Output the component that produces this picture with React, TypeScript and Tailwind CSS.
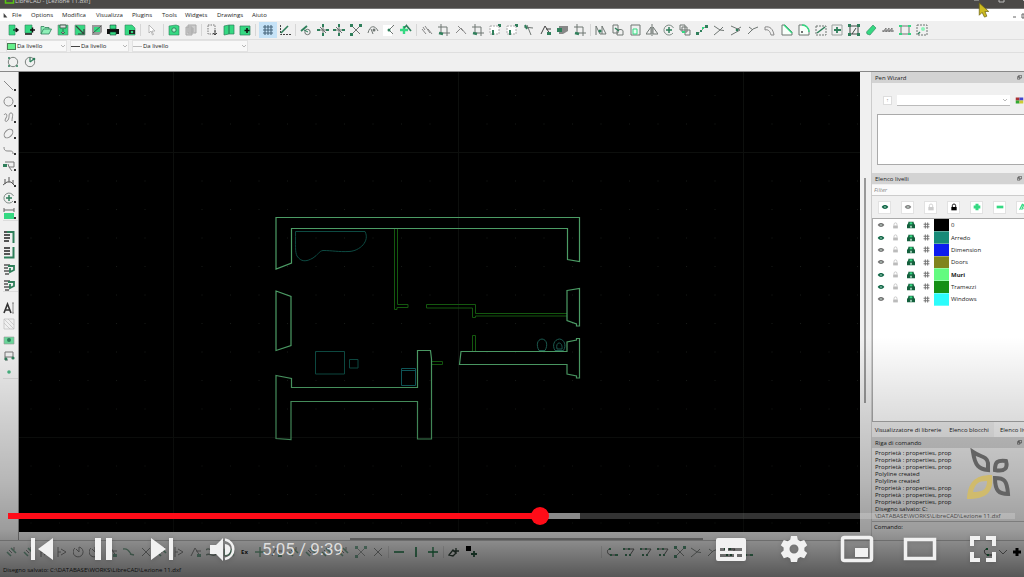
import type { ReactNode } from "react";
import clsx from "clsx";

const G = "#35d982";
const D = "#2f7f5b";
const K = "#6f7673";

const GLYPHS: Record<string, ReactNode> = {
  fileNew: (
    <>
      <path d="M2 1h6v10H2z" fill={G} stroke={D} strokeWidth=".6" />
      <path d="M6 6h5M9 4l2.500 2L9 8z" stroke="#111" fill="#111" />
    </>
  ),
  fileTemplate: (
    <>
      <path d="M1 1h7v8H1z" fill={G} stroke={D} strokeWidth=".6" />
      <path d="M1 10h7M6 6h5M8.500 3.500v5" stroke="#111" strokeWidth="1.500" />
    </>
  ),
  open: <path d="M1 10V2.500h3l1 1h4V5h2.500L9 10zM1 10l2.500-5H9" fill="#8ff0b8" stroke={D} strokeWidth=".8" />,
  save: (
    <>
      <path d="M1 1h10v10H1z" fill={G} stroke={K} strokeWidth=".6" />
      <path d="M3 1h6v3H3zM6 5v5M4 8l2 2 2-2" fill="#ddd" stroke="#3b5b4b" strokeWidth=".9" />
    </>
  ),
  saveAs: (
    <>
      <path d="M1 1h10v10H1z" fill={G} stroke={K} strokeWidth=".6" />
      <path d="M2 2l8 8M4 10h6V5" fill="none" stroke="#35443d" strokeWidth="1.200" />
    </>
  ),
  saveAll: (
    <>
      <path d="M1 1h10v7L8 11H1z" fill="#999" />
      <path d="M3 3h6v5H3z" fill={G} />
      <path d="M2 9l8-7" stroke="#333" strokeWidth=".7" />
    </>
  ),
  print: (
    <>
      <path d="M0 5h12v5H0z" fill="#111" />
      <path d="M3 1h6v4H3zM3 8h6v3H3z" fill={G} stroke="#143" strokeWidth=".6" />
    </>
  ),
  preview: (
    <>
      <path d="M1 1h7l3 3v7H1z" fill={G} stroke={D} strokeWidth=".6" />
      <path d="M5 6h6v4H5z" fill="#222" />
      <circle cx="8" cy="8" r="1.300" fill={G} />
    </>
  ),
  cursor: <path d="M4 1v8l2-2 1.500 4 1-.5L7 7h3z" fill="#fff" stroke="#aaa" strokeWidth=".8" />,
  zoomPage: (
    <>
      <path d="M1 2l7-1 3 1v9H1z" fill={G} stroke={D} strokeWidth=".6" />
      <circle cx="6" cy="6" r="2.200" fill="#a9f5ca" stroke={D} />
    </>
  ),
  copyGray: <path d="M3 1h8v8H3zM1 3h6v8H1zM4 5h5M4 7h5" fill="#ccc" stroke="#aaa" />,
  dashed: (
    <>
      <path d="M2 1h7v9H2z" fill="none" stroke="#777" strokeDasharray="1.500 1" />
      <path d="M9 6v5M7 9l2 2 2-2" stroke="#444" fill="none" />
    </>
  ),
  pages: <path d="M1 2l5-1v9l-5 1zM6 1h5v9H6z" fill={G} stroke={D} strokeWidth=".7" />,
  pageIn: (
    <>
      <path d="M1 2h10v9H1z" fill={G} stroke={D} strokeWidth=".7" />
      <path d="M8 4v5M5.500 6.500h5" stroke="#111" strokeWidth="1.600" />
    </>
  ),
  grid: <path d="M3 1v10M6 1v10M9 1v10M1 3h10M1 6h10M1 9h10" stroke="#47657c" strokeWidth="1.100" />,
  axis: (
    <>
      <path d="M1.500 1v9.500H12" fill="none" stroke="#444" strokeDasharray="2 1" />
      <path d="M2 9l7-7" stroke={D} strokeWidth="1.600" />
    </>
  ),
  snapFree: (
    <>
      <path d="M1 7l6-5" stroke={D} strokeWidth="1.800" />
      <circle cx="7.500" cy="8" r="2.700" fill="none" stroke={K} />
      <path d="M4 6l4 2" stroke={D} />
    </>
  ),
  snapGrid: (
    <>
      <path d="M6 1v10M1 6h10M3 3l6 6" stroke={K} />
      <path d="M5 0h2v3H5zM0 5h3v2H0zM9 5h3v2H9zM5 9h2v3H5z" fill={D} />
    </>
  ),
  snapEnd: (
    <>
      <path d="M2 2l8 8M10 2l-8 8" stroke={K} />
      <path d="M0 0h3v3H0zM9 0h3v3H9zM0 9h3v3H0z" fill={D} />
    </>
  ),
  arc: (
    <>
      <path d="M1 9c2-8 7-8 10-2M4 5l2 5" stroke={K} fill="none" />
      <circle cx="7" cy="6" r="1.500" fill={K} />
    </>
  ),
  pick: (
    <>
      <path d="M0 1h9v11H0z" fill="#fff" />
      <path d="M11 1L6 6l4 4" fill="none" stroke={K} />
      <circle cx="6" cy="6" r="1.500" fill={D} />
    </>
  ),
  plusTool: (
    <>
      <path d="M4 2v8M0 6h8" stroke={G} strokeWidth="2.400" />
      <path d="M6 1l5 6M4 4l3-3" stroke={D} strokeWidth="1.700" />
    </>
  ),
  slashes: <path d="M1 5l4 5M4 2l5 7M7 5l4 5M2 3l2 3" stroke="#888" fill="none" />,
  crop: (
    <>
      <path d="M3 0v9h9M0 3h9v9" stroke={K} fill="none" />
      <path d="M1 9l4 1" stroke={D} strokeWidth="2.400" />
    </>
  ),
  tee: <path d="M1 9l5-5 5 6M3 2l5 5" stroke="#888" fill="none" />,
  pinBox: (
    <>
      <path d="M1 2h9v8H1z" fill="#fff" stroke="#aaa" strokeDasharray="2 1" />
      <path d="M4 6v5M9 1h2v2" stroke={D} strokeWidth="2" />
    </>
  ),
  pickLine: (
    <>
      <path d="M1 3l9 1M4 1l4 10" stroke={K} />
      <path d="M2 1l2 4" stroke={D} strokeWidth="2" />
    </>
  ),
  block: (
    <>
      <path d="M2 2h9v5l-5 3H2z" fill="#888" />
      <path d="M0 4h5v4H0z" fill={D} />
    </>
  ),
  warp: (
    <>
      <path d="M1 11V2l4 8h6L7 2v8" fill="none" stroke={K} />
      <circle cx="5" cy="7" r="1.600" fill={D} />
    </>
  ),
  copy: (
    <>
      <path d="M1 1h5v8H1zM5 7c0-2 6-2 6 0v4H5z" fill="none" stroke={K} />
      <path d="M3 4l4 3" stroke={D} strokeWidth="1.500" />
    </>
  ),
  scale: (
    <>
      <path d="M2 1h9v10H2z" fill="none" stroke={K} />
      <path d="M4 5h4v5H4z" fill="#e8fff2" stroke={G} />
    </>
  ),
  mirror: <path d="M6 0v12M5 3v7H0zM7 3v7h5z" fill="none" stroke={K} />,
  rotate: (
    <>
      <path d="M10 9a5 5 0 1 1 .5-5" fill="none" stroke="#7d8a84" />
      <path d="M6 3v6M3 6h6" stroke={D} strokeWidth="1.500" />
    </>
  ),
  multi: (
    <>
      <path d="M1 1h5v5H1zM3 3h5v5H3zM6 6h5v5H6z" fill="none" stroke={K} />
      <path d="M3 8h3" stroke={G} strokeWidth="2" />
    </>
  ),
  dots: (
    <>
      <path d="M2 10l8-8" stroke={K} strokeDasharray="2 1" />
      <path d="M0 8h3v3H0zM9 1h3v3H9zM4 6h2v2H4z" fill={D} />
      <path d="M6 3h2v2H6z" fill={G} />
    </>
  ),
  cross: <path d="M1 2l6 4 4 .5M1 11l6-5 3-3" fill="none" stroke={K} />,
  crossDot: (
    <>
      <path d="M1 2l9 4-9 5M6 6l5-3" fill="none" stroke={K} />
      <circle cx="7" cy="6" r="1.300" fill={D} />
    </>
  ),
  vee: <path d="M1 10l5-5 5-2M2 3l4 3" fill="none" stroke={K} />,
  offset: <path d="M1 3c5-1 8 2 9 8M1 6c3-1 5 1 6 5M1 3v3M7 11h3" fill="none" stroke="#888" />,
  bevel: (
    <>
      <path d="M1 1v10h10V8L4 1z" fill="#f8fffa" stroke={K} />
      <path d="M3 1l8 8" stroke={G} strokeWidth="1.500" />
    </>
  ),
  fillet: (
    <>
      <path d="M1 1v10h10V8C11 4 8 1 5 1z" fill="#f8fffa" stroke={K} />
      <path d="M4 1c4 0 7 3 7 7" stroke={G} strokeWidth="1.500" fill="none" />
      <circle cx="4" cy="8" r="1" fill="#444" />
    </>
  ),
  divide: (
    <>
      <path d="M1 2h10v9H1z" fill="none" stroke={K} strokeDasharray="2 1" />
      <path d="M2 9l8-6" stroke={D} strokeWidth="1.500" />
    </>
  ),
  stretch: (
    <>
      <path d="M1 1h10v10H1z" fill="none" stroke="#9aa19e" />
      <path d="M6 3v6M3 6h7" stroke={D} strokeWidth="1.800" />
    </>
  ),
  props: (
    <>
      <path d="M2 2h8v8H2zM4 10l4-6" fill="none" stroke="#3f4744" />
      <path d="M0 0h3v3H0zM9 0h3v3H9zM0 9h3v3H0zM9 9h3v3H9z" fill={D} />
    </>
  ),
  erase: <path d="M8 1l3 3-6 7-3-1-.5-2z" fill={G} stroke={D} strokeWidth=".6" />,
  textEdit: <path d="M1 8l3-4v4l3-4v4l3-4v4M0 7h12" fill="none" stroke="#777" />,
  nodes: (
    <>
      <path d="M2 2h8v8H2z" fill="none" stroke={K} />
      <path d="M0 1h3v2H0zM9 1h3v2H9zM0 9h3v2H0zM9 9h3v2H9z" fill={G} />
    </>
  ),
  explode: (
    <>
      <path d="M1 1h10v10H1z" fill="none" stroke={K} strokeDasharray="2 1" />
      <circle cx="7" cy="5" r="2" fill="#8df3b9" />
      <path d="M2 10l2-2" stroke={D} strokeWidth="1.500" />
    </>
  ),
  circleA: (
    <>
      <circle cx="6" cy="6" r="4.700" fill="none" stroke={K} strokeWidth=".9" />
      <path d="M1 2h2M1 10h2M9 10h2" stroke={D} strokeWidth="1.500" />
    </>
  ),
  circleB: (
    <>
      <circle cx="6" cy="6" r="4.700" fill="none" stroke={K} strokeWidth=".9" />
      <path d="M6 6l4-3M6 1.500V6" stroke={D} strokeWidth="1.200" />
      <circle cx="10" cy="3" r="1.300" fill={D} />
    </>
  ),
  line: <path d="M1 1l9 9" stroke="#888" />,
  circle: <circle cx="5.500" cy="5.500" r="4.500" fill="none" stroke="#888" />,
  spline: <path d="M1 3c2-3 4 0 2 3s0 5 2 2 0-7 3-7 1 4 1 8" fill="none" stroke="#888" />,
  ellipse: <ellipse cx="5.500" cy="5.500" rx="5" ry="3.500" transform="rotate(-45 5.500 5.500)" fill="none" stroke="#888" />,
  poly: <path d="M1 3c0 4 2 4 5 4s4 0 4 3" fill="none" stroke="#888" />,
  select: (
    <>
      <path d="M2 2h9v5H6l3 4M6 7L5 4" fill="none" stroke="#777" />
      <path d="M0 4h4v3H0z" fill={D} />
    </>
  ),
  dimension: <path d="M0 9l4-3 4 0 3 3M6 1v5M2 3v5M10 4v4" fill="none" stroke="#555" />,
  measure: (
    <>
      <path d="M1 2h10M1 0v4M11 0v4" stroke="#666" />
      <path d="M1 5h10v6H1z" fill={G} />
    </>
  ),
  orderA: (
    <>
      <path d="M1 1h6M1 4h6M1 7h6M1 10h5" stroke="#555" strokeWidth="1.800" />
      <path d="M4 1h6.500v11" fill="none" stroke={D} strokeWidth="2" />
    </>
  ),
  orderB: (
    <>
      <path d="M1 1h6M1 4h6M1 7h6" stroke="#555" strokeWidth="1.800" />
      <path d="M10.500 0v10.500H1" fill="none" stroke={D} strokeWidth="2" />
    </>
  ),
  orderC: (
    <>
      <path d="M1 2h6M1 5h4M1 8h6M2 11h4" stroke="#555" strokeWidth="1.700" />
      <path d="M5 3h6v4l-4 2V5" fill="none" stroke={D} strokeWidth="1.800" />
    </>
  ),
  text: (
    <>
      <path d="M1 11L4.500 2 8 11M2.500 8h4" fill="none" stroke="#333" strokeWidth="1.600" />
      <path d="M9 1h2M10 1v10M9 11h2" stroke="#888" />
    </>
  ),
  hatch: <path d="M1 1h10v10H1zM1 5l6 6M1 1l10 10M5 1l6 6" fill="none" stroke="#bbb" strokeWidth=".7" />,
  image: (
    <>
      <path d="M1 3h10v7H1z" fill="#6bd69a" stroke="#999" strokeWidth=".6" />
      <circle cx="6" cy="6" r="2" fill={D} />
    </>
  ),
  insert: (
    <>
      <path d="M2 2h8v5H2zM2 7v3h3" fill="none" stroke="#777" />
      <circle cx="10" cy="8" r="1.600" fill={D} />
      <circle cx="3" cy="9" r="1.400" fill={D} />
    </>
  ),
  point: <circle cx="6" cy="6" r="1.800" fill="#46b582" />,
  eye: (
    <>
      <path d="M1 6c2.500-4 7.500-4 10 0-2.500 4-7.500 4-10 0z" fill="currentColor" />
      <circle cx="6" cy="6" r="1" fill="#dfe" />
    </>
  ),
  lock: (
    <>
      <path d="M2 6h8v5H2z" fill="currentColor" />
      <path d="M3.500 6V4a2.500 2.500 0 0 1 5 0v2" fill="none" stroke="currentColor" strokeWidth="1.300" />
    </>
  ),
  printer: (
    <>
      <path d="M0 6l2-3V1h8v2l2 3v5H0z" fill="#14603d" />
      <path d="M4 2h4v3H4z" fill={G} />
      <path d="M5 7h2v3H5z" fill="#dfe" />
    </>
  ),
  hash: <path d="M4 1v10M8 1v10M1 4h10M1 8h10" stroke="#777" strokeWidth="1.800" />,
  plus: <path d="M6 1v10M1 6h10" stroke={G} strokeWidth="4.500" />,
  plusDark: <path d="M6 2v8M2 6h8" stroke="#000" strokeWidth="3" />,
  minus: <path d="M1 6h10" stroke={G} strokeWidth="4" />,
  pen: <path d="M1 10l4-8 2 1-3 7M7 9l4-5v6" fill="none" stroke={G} strokeWidth="1.800" />,
  float: <path d="M4 1h7v6H4zM1 4h6v6H1z" fill="#ddd" stroke="#333" strokeWidth="1.300" />,
  palette: (
    <>
      <path d="M1 2h5v4H1z" fill="#a33" />
      <path d="M6 2h5v4H6z" fill="#44c" />
      <path d="M1 6h5v4H1z" fill="#3a3" />
      <path d="M6 6h5v4H6z" fill="#cc3" />
    </>
  ),
  chevron: <path d="M2 4l4 4 4-4" fill="none" stroke="#777" />,
  clock: <path d="M2 2a5 5 0 1 0 4-1v5L3 3" fill="none" stroke="#444" />,
  dimA: <path d="M2 1v10M5 3l5 3-5 3M2 6h3" fill="none" stroke="#444" />,
  snapA: (
    <>
      <path d="M1 6l4 4M5 2l5 5" stroke={D} strokeWidth="1.600" />
      <path d="M3 4l3 3M8 1v3" stroke="#444" />
    </>
  ),
  wave: <path d="M0 4c3-4 5 3 11-1M0 9c4-3 6 3 11-1" fill="none" stroke="#3d5a4b" strokeWidth="1.300" />,
  snapB: (
    <>
      <path d="M1 10L5 2l5 8M6 5h5" fill="none" stroke="#444" />
      <path d="M7 8h4v3H7z" fill={D} />
    </>
  ),
  snapC: <path d="M0 3c4-1 6 2 8 5M7 8l4 1" fill="none" stroke="#28704c" strokeWidth="1.300" />,
  xMark: <path d="M2 2l8 8M10 2l-8 8" stroke="#4c5250" />,
  hLine: <path d="M1 6h10M4 6h4" stroke="#1e7a48" strokeWidth="1.500" />,
  vLine: <path d="M6 1v10" stroke="#1e7a48" strokeWidth="1.600" />,
  cross2: <path d="M6 1v10M1 6h10" stroke="#1e7a48" strokeWidth="1.300" />,
  relA: <path d="M1 9l4-5 3 3-3 3zM8 2v6M5 5h6" fill="none" stroke="#2f4238" strokeWidth="1.300" />,
  relB: (
    <>
      <path d="M1 0h5v5H1z" fill="#000" />
      <path d="M9 5v6M6 8h6" stroke="#24563d" strokeWidth="1.800" />
    </>
  ),
  polyA: (
    <>
      <path d="M4 3C0 3 1 9 5 9h6" fill="none" stroke="#444" />
      <path d="M3 2h2v2H3zM9 8h3v2H9zM4 8h2v2H4z" fill="#1e7a48" />
    </>
  ),
  polyB: (
    <>
      <path d="M1 3h5l5 0-4 6" fill="none" stroke="#444" />
      <path d="M0 2h2v2H0zM5 2h2v2H5zM2 8h2v2H2zM6 8h2v2H6z" fill="#1c6a41" />
    </>
  ),
};

function Icon({ name, className = "size-3" }: { name: string; className?: string }) {
  return (
    <svg viewBox="0 0 12 12" className={clsx("shrink-0", className)} aria-hidden="true">
      {GLYPHS[name]}
    </svg>
  );
}

function Tools({ names, className }: { names: string[]; className?: string }) {
  return (
    <div className={clsx("flex shrink-0 items-center justify-between", className)}>
      {names.map((name, i) => (
        <button
          key={i}
          type="button"
          aria-label={name}
          className={clsx(
            "flex h-4 items-center justify-center",
            name === "grid" ? "w-[18px] bg-[#c5e2f7]" : "w-[14px]"
          )}
        >
          <Icon name={name} />
        </button>
      ))}
    </div>
  );
}

function Sep() {
  return <div className="mx-[3px] h-3 w-px shrink-0 bg-[#d6d6d6]" />;
}

const MENUS = [
  ["File", "w-[19px]"],
  ["Options", "w-[31px]"],
  ["Modifica", "w-[34px]"],
  ["Visualizza", "w-[36px]"],
  ["Plugins", "w-[30px]"],
  ["Tools", "w-[23px]"],
  ["Widgets", "w-[32px]"],
  ["Drawings", "w-[35px]"],
  ["Aiuto", "w-[24px]"],
];

const LAYERS = [
  { name: "0", swatch: "bg-black", visible: false },
  { name: "Arredo", swatch: "bg-[#178a78]", visible: true },
  { name: "Dimension", swatch: "bg-[#0d1cf0]", visible: false },
  { name: "Doors", swatch: "bg-[#80841c]", visible: false },
  { name: "Muri", swatch: "bg-[#63fb80]", visible: true, active: true },
  { name: "Tramezzi", swatch: "bg-[#159015]", visible: true },
  { name: "Windows", swatch: "bg-[#2cfcfb]", visible: false },
];

const LOG = [
  "Proprietà : properties, prop",
  "Proprietà : properties, prop",
  "Proprietà : properties, prop",
  "Polyline created",
  "Polyline created",
  "Proprietà : properties, prop",
  "Proprietà : properties, prop",
  "Proprietà : properties, prop",
  "Disegno salvato: C:",
  "\\DATABASE\\WORKS\\LibreCAD\\Lezione 11.dxf",
];

function TitleBar() {
  return (
    <header className="flex h-[9px] shrink-0 items-end overflow-hidden border-b border-[#777] bg-[#4b4947] pl-1 text-[#d0d0d0]">
      <svg viewBox="0 0 10 10" className="mb-1 h-[10px] w-[11px] shrink-0">
        <path d="M1 4v5h8V4" fill="none" stroke="#59c414" strokeWidth="1.500" />
      </svg>
      <span className="leading-[14px] whitespace-nowrap">LibreCAD - [Lezione 11.dxf]</span>
      <svg viewBox="0 0 52 9" className="ml-auto h-[9px] w-[52px] shrink-0" fill="none" stroke="#bbb">
        <path d="M2 1h5M27 0v3h5V0M50 0l2 2" />
      </svg>
    </header>
  );
}

function MenuBar() {
  return (
    <nav className="flex h-3 shrink-0 items-center bg-white pl-[3px]">
      <svg viewBox="0 0 8 8" className="mr-1 size-[5px]">
        <path d="M1 0v7h6z" fill="#444" />
      </svg>
      {MENUS.map(([label, width]) => (
        <button key={label} type="button" className={clsx("text-left", width)}>
          {label}
        </button>
      ))}
      <svg viewBox="0 0 14 8" className="ml-auto h-2 w-[14px]" fill="none" stroke="#666">
        <path d="M3 6h3M12 3h2v4h-2z" />
      </svg>
    </nav>
  );
}

function PenSelect({ label, className, children }: { label: string; className: string; children: ReactNode }) {
  return (
    <label className={clsx("flex h-[12px] items-center gap-px border border-[#e2e2e2] bg-[#f8f8f8]", className)}>
      {children}
      <select aria-label={label} className="min-w-0 grow appearance-none outline-none">
        <option>Da livello</option>
      </select>
      <Icon name="chevron" className="size-[6px]" />
    </label>
  );
}

function Toolbars() {
  return (
    <>
      <div className="flex h-[18px] shrink-0 items-center overflow-hidden pl-[6px]">
        <Tools
          className="w-[131px]"
          names={["fileNew", "fileTemplate", "open", "save", "saveAs", "saveAll", "print", "preview"]}
        />
        <Sep />
        <Tools className="w-4" names={["cursor"]} />
        <Sep />
        <Tools className="w-[31px]" names={["zoomPage", "copyGray"]} />
        <Sep />
        <Tools className="w-[47px]" names={["dashed", "pages", "pageIn"]} />
        <Sep />
        <Tools className="w-[33px]" names={["grid", "axis"]} />
        <Sep />
        <Tools
          className="w-[114px]"
          names={["snapFree", "snapGrid", "snapGrid", "snapEnd", "arc", "pick", "plusTool"]}
        />
        <Sep />
        <Tools
          className="w-[167px]"
          names={["slashes", "crop", "tee", "crop", "pinBox", "pinBox", "pickLine", "snapB", "block", "crop"]}
        />
        <Sep />
        <Tools
          className="w-[335px]"
          names={[
            "warp", "copy", "scale", "mirror", "rotate", "multi", "dots", "cross", "crossDot", "vee",
            "offset", "bevel", "fillet", "divide", "stretch", "props", "erase", "textEdit", "nodes", "explode",
          ]}
        />
      </div>
      <div className="flex h-[14px] shrink-0 items-center gap-[3px] border-y border-[#dfdfdf] pl-[6px]">
        <PenSelect label="Colore" className="w-[61px]">
          <span className="h-[7px] w-[9px] shrink-0 border border-[#4c7a55] bg-[#67f08b]" />
        </PenSelect>
        <PenSelect label="Spessore" className="w-[59px]">
          <span className="h-px w-[9px] shrink-0 bg-[#444]" />
        </PenSelect>
        <PenSelect label="Tipo di linea" className="w-[116px]">
          <span className="h-px w-[9px] shrink-0 bg-[#bbb]" />
        </PenSelect>
      </div>
      <div className="flex h-[18px] shrink-0 items-center pl-[6px]">
        <Tools className="w-[31px]" names={["circleA", "circleB"]} />
      </div>
    </>
  );
}

function SideTools() {
  const groups = [
    ["line", "circle", "spline", "ellipse", "poly", "select", "dimension", "rotate", "measure"],
    ["orderA", "orderB", "orderC", "orderC"],
    ["text", "hatch", "image", "insert", "point"],
  ];
  return (
    <aside className="flex w-[19px] shrink-0 flex-col gap-[6px] border-r border-[#999] pt-1 pl-[3px]">
      {groups.map((names, g) => (
        <div key={g} className="flex flex-col border-b border-[#dcdcdc]">
          {names.map((name, i) => (
            <button key={i} type="button" aria-label={name} className="flex h-4 w-[14px] items-end">
              <Icon name={name} />
              {g === 0 && <span className="-ml-px mb-px size-[2px] shrink-0 bg-[#333]" />}
            </button>
          ))}
        </div>
      ))}
    </aside>
  );
}

function FloorPlan() {
  return (
    <svg viewBox="19 72 841 460" className="min-h-0 w-full grow bg-black" fill="none" role="img" aria-label="Lezione 11">
      <defs>
        <pattern id="dots" x="458" y="437" width="28.500" height="28.500" patternUnits="userSpaceOnUse">
          <rect width="1" height="1" fill="#171a17" />
        </pattern>
      </defs>
      <rect x="19" y="72" width="841" height="460" fill="url(#dots)" />
      <path d="M173.500 72v460M458.500 72v460M743.500 72v460M19 152.500h841M19 437.500h841" stroke="#0d0f0d" />
      <g stroke="#0d4a42">
        <path d="M295.500 231.500H365C370 241 360 251 349 251.500C338 252 332 250.500 323 250.500C319 251 318 255 313 258C306 262 301 262 297 256C295 252 295.500 246 295.500 231.500Z" />
        <path d="M315.500 351.500h29v22.500h-29zM349.500 359.500h8.500v8.500h-8.500z" />
        <path d="M401.500 368.500h14v17h-14zM402 370.500h13" stroke="#0f5a5c" />
        <path d="M539 350.500c-3-5-2-11 3-11.500c5 .5 6 6.500 3 11.500zM555 350.500c-3-5-1-11 4.500-11.500c5 .5 7 6.500 4 11.500zM557 349c-2-8 6-8 5 0z" stroke="#1b5b50" />
      </g>
      <g stroke="#14580f">
        <path d="M394.500 228.500V309.500H397V307.500H408V304.500H397.500V228.500" />
        <path d="M567 313.500H475.500V304.500H426.500V308H472.500V317.500H475.500V316H567M472.500 351V335.500H475.500V351M431.500 361.500H442.500V364.500H431.500" />
      </g>
      <g stroke="#4c9c65" strokeWidth="1.200">
        <path d="M276 217.500H579.500V261.500L567.500 259.500V228.500H291.500V263L276 269Z" />
        <path d="M276 291L291 296.500V345.500L276 350.500Z" />
        <path d="M276 375.500L291.500 378.500V387.500H417.500V350.500H430.500L431.500 359V439H417.500V401.500H291V439.500L276 438.500Z" />
        <path d="M567 290.500L579.500 288.500V326H576.500V324L567 320.500Z" />
        <path d="M461 351.500H567V342L576.500 340V338.500H579.500V378H576.500V376L567 374V364.500H459.500Z" />
      </g>
    </svg>
  );
}

function DockHeader({ title }: { title: string }) {
  return (
    <h2 className="flex h-[11px] shrink-0 items-center justify-between bg-[#d3d3d3] pr-[2px] pl-[3px]">
      {title}
      <Icon name="float" className="size-[5px]" />
    </h2>
  );
}

function LayerTable() {
  return (
    <div className="min-h-0 grow overflow-hidden border border-r-0 border-[#aaa] bg-white">
      <table className="h-[87px] w-full table-fixed border-collapse">
        <tbody>
          {LAYERS.map((layer) => (
            <tr key={layer.name}>
              <td className={clsx("w-[15px]", layer.visible ? "text-[#15694a]" : "text-[#777]")}>
                <Icon name="eye" className="mx-auto size-2" />
              </td>
              <td className="w-[15px] text-[#bbb]">
                <Icon name="lock" className="mx-auto size-[7px]" />
              </td>
              <td className="w-[15px]">
                <Icon name="printer" className="mx-auto size-2" />
              </td>
              <td className="w-4">
                <Icon name="hash" className="mx-auto size-[7px]" />
              </td>
              <td className={clsx("w-[15px] border-b border-white/30", layer.swatch)} />
              <td className={clsx("pl-[2px] leading-[8px]", layer.active && "font-bold")}>{layer.name}</td>
            </tr>
          ))}
        </tbody>
      </table>
    </div>
  );
}

function Dock() {
  const actions = [
    ["eye", "text-[#15694a]"],
    ["eye", "text-[#888]"],
    ["lock", "text-[#ccc]"],
    ["lock", "text-black"],
    ["plus", ""],
    ["minus", ""],
    ["pen", ""],
  ];
  return (
    <aside className="flex w-[152px] shrink-0 flex-col overflow-hidden">
      <DockHeader title="Pen Wizard" />
      <div className="flex h-[31px] shrink-0 items-center gap-[5px] pt-[3px] pl-[11px]">
        <button type="button" className="size-[9px] border border-[#ddd] bg-white text-[5px] leading-[6px] text-[#999]">
          ↑
        </button>
        <label className="flex h-[11px] w-[117px] items-center border-b border-[#bbb] bg-white pr-[2px]">
          <select aria-label="Penna" className="min-w-0 grow appearance-none outline-none" />
          <Icon name="chevron" className="size-[6px]" />
        </label>
        <Icon name="palette" className="size-[9px]" />
      </div>
      <div className="ml-[5px] h-[51px] shrink-0 border border-r-0 border-[#aaa] bg-white" />
      <div className="h-2 shrink-0" />
      <DockHeader title="Elenco livelli" />
      <input
        aria-label="Filtro livelli"
        placeholder="Filter"
        className="mt-px h-[11px] shrink-0 border-b border-[#ccc] bg-[#fafafa] px-[2px] italic outline-none placeholder:text-[#888]"
      />
      <div className="flex h-[22px] shrink-0 items-center gap-[10px] pl-[6px]">
        {actions.map(([name, tone], i) => (
          <button
            key={i}
            type="button"
            aria-label={`${name} ${i}`}
            className={clsx("flex size-[13px] shrink-0 items-center justify-center border border-[#e2e2e2] bg-white", tone)}
          >
            <Icon name={name} className="size-2" />
          </button>
        ))}
      </div>
      <LayerTable />
      <div className="flex h-[15px] shrink-0 items-center whitespace-nowrap">
        <button type="button" className="w-[72px] shrink-0">Visualizzatore di librerie</button>
        <button type="button" className="w-[50px] shrink-0">Elenco blocchi</button>
        <button type="button" className="h-full shrink-0 bg-[#fafafa] px-[6px]">Elenco livelli</button>
      </div>
      <DockHeader title="Riga di comando" />
      <div className="mt-[2px] flex shrink-0 flex-col border-b border-[#bbb] pb-px pl-[3px] leading-[7px] whitespace-nowrap">
        {LOG.map((entry, i) => (
          <p key={i}>{entry}</p>
        ))}
      </div>
      <label className="flex h-[10px] shrink-0 items-center pl-[2px]">
        Comando:
        <input className="min-w-0 grow outline-none" />
      </label>
      <div className="h-2 shrink-0" />
    </aside>
  );
}

function BottomTools() {
  const left = [
    "snapA", "snapA", "dimA", "dimA", "clock", "clock", "snapB", "snapC", "xMark", "snapA", "dimA",
    "snapB", "wave", "image",
  ];
  return (
    <div className="flex h-[22px] shrink-0 items-center overflow-hidden border-t border-[#bbb] pl-[5px]">
      <Tools className="w-[231px] opacity-60" names={left} />
      <button type="button" className="w-[17px] text-center font-bold">Ex</button>
      <Tools
        className="w-[132px] opacity-60"
        names={["cross2", "snapB", "snapA", "snapA", "snapA", "snapA", "snapEnd", "xMark"]}
      />
      <Sep />
      <Tools className="w-[48px]" names={["hLine", "vLine", "cross2"]} />
      <Sep />
      <Tools className="w-[31px]" names={["relA", "relB"]} />
      <div className="grow" />
      <Sep />
      <Tools
        className="mr-[228px] w-[149px] opacity-80"
        names={["polyA", "polyB", "polyB", "polyB", "snapEnd", "cross", "vee", "polyB", "polyA"]}
      />
      <Tools className="w-[42px]" names={["polyA", "chevron", "plusDark"]} />
    </div>
  );
}

function ControlButton({ label, className, children }: { label: string; className: string; children: ReactNode }) {
  return (
    <button type="button" aria-label={label} className={clsx("flex shrink-0 justify-center", className)}>
      <svg viewBox="0 0 36 28" className="h-7 w-9 drop-shadow-sm" fill="#f1f1f1">
        {children}
      </svg>
    </button>
  );
}

function PlayerControls() {
  return (
    <div className="absolute inset-x-0 bottom-0 flex h-[240px] flex-col justify-end bg-[linear-gradient(to_bottom,transparent,rgba(0,0,0,0.12)_30%,rgba(0,0,0,0.24)_60%,rgba(0,0,0,0.35)_80%,rgba(0,0,0,0.64))]">
      <input
        type="range"
        aria-label="Seek"
        min={0}
        max={579}
        defaultValue={306}
        className="mr-[9px] ml-2 h-[18px] appearance-none bg-transparent outline-none [&::-webkit-slider-runnable-track]:h-[6px] [&::-webkit-slider-runnable-track]:bg-[linear-gradient(to_right,#ff0c18_53%,#8a8a8a_53%,#8a8a8a_56.8%,rgba(255,255,255,0.2)_56.8%)] [&::-webkit-slider-thumb]:-mt-[6px] [&::-webkit-slider-thumb]:size-[18px] [&::-webkit-slider-thumb]:appearance-none [&::-webkit-slider-thumb]:rounded-full [&::-webkit-slider-thumb]:bg-[#ff0c18]"
      />
      <div className="flex h-[52px] items-center pr-[10px] pb-1 pl-3">
        <ControlButton label="Previous" className="w-[60px]">
          <path d="M7 3h4v22H7zM29 3v22L14 14z" />
        </ControlButton>
        <ControlButton label="Pause" className="w-[60px]">
          <path d="M11 3h6v22h-6zM22 3h6v22h-6z" />
        </ControlButton>
        <ControlButton label="Next" className="w-[60px]">
          <path d="M7 3v22l15-11zM25 3h4v22h-4z" />
        </ControlButton>
        <ControlButton label="Mute" className="w-[60px]">
          <path d="M6 10v9h6l7 7V3l-7 7z" />
          <path d="M21 9a5.500 5.500 0 0 1 0 11z" />
          <path d="M21 4.500c11 2.500 11 17 0 19.500" fill="none" stroke="#f1f1f1" strokeWidth="2.600" />
        </ControlButton>
        <span className="ml-[10px] font-[Roboto,sans-serif] text-[17px] leading-6 text-[#ddd]">5:05 / 9:39</span>
        <div className="grow" />
        <ControlButton label="Subtitles" className="w-[63px]">
          <path
            fillRule="evenodd"
            d="M5 3h26q2 0 2 2v19q0 2-2 2H5q-2 0-2-2V5q0-2 2-2zM7 13v3h5v-3zM15 13v3h14v-3zM7 19v3h14v-3zM24 19v3h5v-3z"
          />
        </ControlButton>
        <ControlButton label="Settings" className="w-[63px]">
          <path
            fillRule="evenodd"
            d="M15 1h6l.8 3.800 2.600 1.500L28.200 5l3 5.200-2.800 2.500v3L31.200 18l-3 5.200-3.800-1.300-2.600 1.500L21 27h-6l-.8-3.600-2.600-1.500-3.800 1.300-3-5.200 2.800-2.500v-3L4.800 10.200l3-5.200 3.800 1.300 2.600-1.500zM18 9.500a4.500 4.500 0 1 0 0 9 4.500 4.500 0 0 0 0-9z"
          />
        </ControlButton>
        <ControlButton label="Miniplayer" className="w-[63px]">
          <rect x="3.500" y="2.500" width="29" height="23" rx="2" fill="none" stroke="#f1f1f1" strokeWidth="3.500" />
          <path d="M16 13h13v9H16z" />
        </ControlButton>
        <ControlButton label="Theater mode" className="w-[63px]">
          <rect x="3.500" y="4.500" width="29" height="19" fill="none" stroke="#f1f1f1" strokeWidth="3.500" />
        </ControlButton>
        <ControlButton label="Full screen" className="w-[63px]">
          <path d="M5 1h10v4H9v6H5zM21 1h10v10h-4V5h-6zM5 17h4v6h6v4H5zM27 17h4v10H21v-4h6z" />
        </ControlButton>
      </div>
    </div>
  );
}

function Watermark() {
  return (
    <svg viewBox="0 0 48 54" className="absolute right-[11px] bottom-[75px] h-[54px] w-12" fill="none" strokeWidth="4">
      <path d="M8 4C15 9 22 8 23 15V22C14 21 10 18 8 4Z" stroke="#636363" />
      <path d="M30 22C30 14 32 12 41 13C43 20 40 24 30 22Z" stroke="#636363" />
      <path d="M30 30C39 30 42 32 43 46C34 46 30 43 30 30Z" stroke="#636363" />
      <path
        fillRule="evenodd"
        fill="#d0bb6c"
        d="M27 27C29 44 22 51 2 51C3 35 9 27 27 27ZM22 33C13 33 10 36 8 44C17 44 22 42 22 33Z"
      />
    </svg>
  );
}

export default function App() {
  return (
    <main className="relative flex h-screen flex-col overflow-hidden bg-[#f0f0f0] font-['Open_Sans','Noto_Sans',sans-serif] text-[6px] leading-[8px] text-[#222]">
      <TitleBar />
      <MenuBar />
      <Toolbars />
      <div className="flex min-h-0 grow border-t border-[#888]">
        <SideTools />
        <section className="flex min-w-0 grow flex-col">
          <FloorPlan />
          <div className="flex h-2 shrink-0 items-end justify-end">
            <div className="mr-[157px] h-[2px] w-[42%] bg-[#999]" />
          </div>
        </section>
        <div className="flex w-3 shrink-0 flex-col border-r border-[#ccc] pt-[106px] pl-1">
          <div className="h-[225px] w-[2px] bg-[#999]" />
        </div>
        <Dock />
      </div>
      <BottomTools />
      <footer className="h-[15px] shrink-0 pt-1 pl-[3px]">
        Disegno salvato: C:\DATABASE\WORKS\LibreCAD\Lezione 11.dxf
      </footer>
      <PlayerControls />
      <Watermark />
      <svg viewBox="0 0 12 18" className="absolute top-[2px] right-[34px] h-[17px] w-3">
        <path d="M1 1v13l3-3 2.500 5 2.500-1-2-5h4z" fill="#cdbb20" stroke="#6f6512" strokeWidth=".8" />
      </svg>
    </main>
  );
}
